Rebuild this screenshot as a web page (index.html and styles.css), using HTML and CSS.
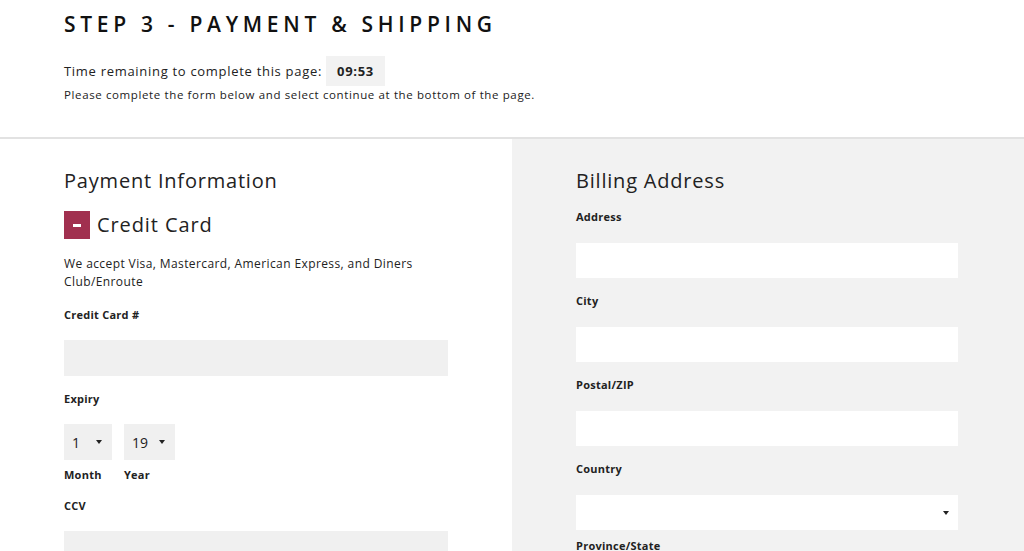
FILE: index.html
```html
<!DOCTYPE html>
<html lang="en">
<head>
    <meta charset="UTF-8">
    <meta name="viewport" content="width=device-width, initial-scale=1.0">
    <title>Step 3 - Payment &amp; Shipping</title>
    <link rel="stylesheet" href="styles.css">
</head>
<body>
    <header class="page-head">
        <h1>STEP 3 - PAYMENT &amp; SHIPPING</h1>
        <div class="timer-row">
            <span>Time remaining to complete this page:</span>
            <span class="timer">09:53</span>
        </div>
        <p class="note">Please complete the form below and select continue at the bottom of the page.</p>
    </header>

    <main class="columns">
        <section class="col col-payment">
            <h2>Payment Information</h2>

            <div class="method">
                <span class="toggle"><span class="bar"></span></span>
                <span class="method-name">Credit Card</span>
            </div>

            <p class="accept">We accept Visa, Mastercard, American Express, and Diners Club/Enroute</p>

            <label class="field-label" for="card">Credit Card #</label>
            <input class="field" type="text" id="card">

            <label class="field-label">Expiry</label>
            <div class="expiry">
                <div class="expiry-item">
                    <div class="mini-select">1 <span class="caret"></span></div>
                    <span class="sub-label">Month</span>
                </div>
                <div class="expiry-item">
                    <div class="mini-select wide">19 <span class="caret"></span></div>
                    <span class="sub-label">Year</span>
                </div>
            </div>

            <label class="field-label ccv" for="ccv">CCV</label>
            <input class="field" type="text" id="ccv">
        </section>

        <section class="col col-billing">
            <h2>Billing Address</h2>

            <label class="field-label" for="address">Address</label>
            <input class="field white" type="text" id="address">

            <label class="field-label" for="city">City</label>
            <input class="field white" type="text" id="city">

            <label class="field-label" for="zip">Postal/ZIP</label>
            <input class="field white" type="text" id="zip">

            <label class="field-label">Country</label>
            <div class="field white select-box"><span class="caret"></span></div>

            <label class="field-label">Province/State</label>
        </section>
    </main>
</body>
</html>
```

FILE: styles.css
```css
body {
    margin: 0;
    font-family: "Open Sans", Arial, sans-serif;
    color: #222;
    background-color: #fff;
}

/* header */
.page-head {
    padding: 11px 64px 0;
    height: 126px;
    border-bottom: 2px solid #e2e2e2;
}
.page-head h1 {
    margin: 0;
    font-size: 21px;
    line-height: 26px;
    font-weight: 600;
    letter-spacing: 4.7px;
    color: #111;
}
.timer-row {
    display: flex;
    align-items: center;
    gap: 4px;
    margin-top: 19px;
    font-size: 13px;
    letter-spacing: 0.7px;
}
.timer {
    background-color: #f2f2f2;
    height: 30px;
    padding: 0 11px;
    display: flex;
    align-items: center;
    font-weight: 700;
}
.note {
    margin: 2px 0 0;
    font-size: 11.5px;
    line-height: 14px;
    letter-spacing: 0.62px;
}

/* columns */
.columns {
    display: grid;
    grid-template-columns: 512px 512px;
}
.col {
    padding: 30px 64px 0;
    display: flex;
    flex-direction: column;
    align-items: flex-start;
}
.col-billing {
    background-color: #f2f2f2;
    padding-right: 66px;
}
.col h2 {
    margin: 0 0 17px;
    font-size: 20px;
    line-height: 24px;
    font-weight: 400;
    letter-spacing: 0.8px;
    color: #222;
}

.method {
    display: flex;
    align-items: center;
    gap: 7px;
    margin-top: 1px;
}
.toggle {
    width: 26px;
    height: 28px;
    background-color: #a1304f;
    display: flex;
    align-items: center;
    justify-content: center;
}
.toggle .bar {
    width: 8px;
    height: 3px;
    background-color: #fff;
}
.method-name {
    font-size: 20px;
    line-height: 24px;
    letter-spacing: 0.9px;
}
.accept {
    margin: 16px 0 17px;
    font-size: 12px;
    line-height: 18px;
    letter-spacing: 0.4px;
    width: 384px;
}

.field-label {
    font-size: 11px;
    line-height: 14px;
    font-weight: 700;
    letter-spacing: 0.25px;
    color: #222;
}
.field {
    display: block;
    width: 100%;
    height: 36px;
    margin: 18px 0 16px;
    padding: 0 10px;
    box-sizing: border-box;
    border: none;
    background-color: #f0f0f0;
}
.field.white {
    background-color: #fff;
    margin: 19px 0 16px;
    height: 35px;
}
.field.white.select-box {
    margin-bottom: 9px;
}

.expiry {
    display: flex;
    gap: 12px;
    margin-top: 18px;
}
.expiry-item {
    display: flex;
    flex-direction: column;
}
.mini-select {
    width: 48px;
    height: 36px;
    box-sizing: border-box;
    background-color: #f0f0f0;
    display: flex;
    align-items: center;
    justify-content: space-between;
    padding: 0 10px 0 8px;
    font-size: 14px;
}
.mini-select.wide {
    width: 51px;
}
.caret {
    width: 0;
    height: 0;
    border-left: 3px solid transparent;
    border-right: 3px solid transparent;
    border-top: 4px solid #222;
}
.sub-label {
    margin-top: 8px;
    font-size: 11px;
    line-height: 14px;
    font-weight: 700;
    letter-spacing: 0.25px;
}
.field-label.ccv {
    margin-top: 17px;
}

.select-box {
    display: flex;
    align-items: center;
    justify-content: flex-end;
    padding-right: 9px;
}
```
